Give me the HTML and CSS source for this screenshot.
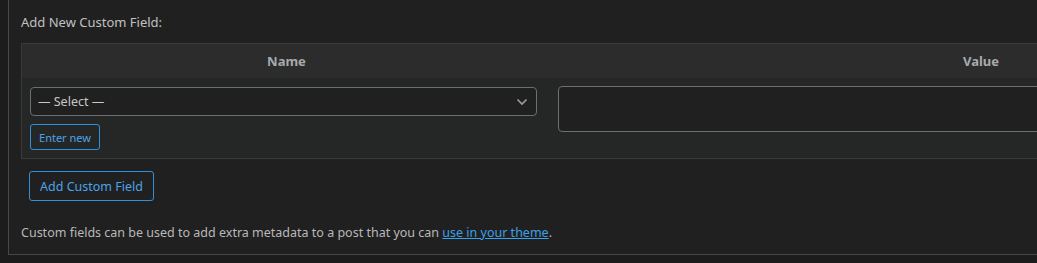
FILE: index.html
```html
<!DOCTYPE html>
<html lang="en">
<head>
    <meta charset="UTF-8">
    <meta name="viewport" content="width=device-width, initial-scale=1.0">
    <title>Custom Fields</title>
    <link rel="stylesheet" href="styles.css">
</head>
<body>
    <div class="panel">
        <p class="add-title">Add New Custom Field:</p>
        <div class="meta-table">
            <div class="meta-head">
                <div class="col-name">Name</div>
                <div class="col-value">Value</div>
            </div>
            <div class="meta-row">
                <div class="col-name cell">
                    <div class="select-box">
                        <span>&mdash; Select &mdash;</span>
                        <svg class="chevron" width="12" height="8" viewBox="0 0 12 8">
                            <path d="M1.5 1.5 L6 6 L10.5 1.5" fill="none" stroke="#9a9a9a" stroke-width="1.7"/>
                        </svg>
                    </div>
                    <button class="btn btn-small">Enter new</button>
                </div>
                <div class="col-value cell">
                    <textarea class="value-box"></textarea>
                </div>
            </div>
        </div>
        <div class="submit-row">
            <button class="btn btn-add">Add Custom Field</button>
        </div>
        <p class="help">Custom fields can be used to add extra metadata to a post that you can <a href="#">use in your theme</a>.</p>
    </div>
</body>
</html>
```

FILE: styles.css
```css
body {
    margin: 0;
    background: #1c1c1c;
    font-family: "Noto Sans", "Open Sans", sans-serif;
    font-size: 13px;
    color: #c3c4c7;
    overflow: hidden;
}
.panel {
    margin-left: 8px;
    width: 1500px;
    height: 255px;
    box-sizing: border-box;
    background: #202020;
    border-left: 1px solid #474747;
    border-bottom: 1px solid #474747;
    padding: 12px 12px 0 12px;
}
.add-title {
    margin: 0 0 11px 0;
    line-height: 20px;
    color: #c0c0c0;
}
.meta-table {
    width: 1395px;
    border: 1px solid #3a3a3a;
}
.meta-head {
    display: flex;
    height: 34px;
    align-items: center;
    background: #2c2c2c;
    font-weight: bold;
    color: #a7aaad;
}
.col-name {
    width: 529px;
    text-align: center;
}
.col-value {
    flex: 1;
    text-align: center;
    padding-right: 6px;
}
.meta-row {
    display: flex;
    height: 80px;
    background: #252726;
}
.cell {
    text-align: left;
    box-sizing: border-box;
}
.col-name.cell {
    padding: 9px 0 0 8px;
}
.col-value.cell {
    padding: 8px 0 0 7px;
}
.select-box {
    width: 507px;
    height: 29px;
    box-sizing: border-box;
    border: 1px solid #6e6e6e;
    border-radius: 4px;
    background: #202020;
    display: flex;
    align-items: center;
    justify-content: space-between;
    padding: 0 8px 0 7px;
    color: #c8c8c8;
    font-size: 12.5px;
}
.select-box span {
    margin-top: -1px;
}
.chevron {
    margin-top: 1px;
}
.btn {
    display: block;
    background: transparent;
    border: 1px solid #3390d6;
    border-radius: 3px;
    color: #4ba3e8;
    font-family: inherit;
    cursor: pointer;
    padding: 0;
}
.btn-small {
    margin-top: 8px;
    width: 70px;
    height: 26px;
    font-size: 11px;
}
.value-box {
    display: block;
    width: 100%;
    height: 46px;
    box-sizing: border-box;
    border: 1px solid #6e6e6e;
    border-radius: 4px;
    background: #202020;
    resize: none;
}
.submit-row {
    padding: 12px 0 0 8px;
}
.btn-add {
    width: 125px;
    height: 30px;
    font-size: 12.5px;
}
.help {
    margin: 22px 0 0 0;
    line-height: 20px;
    font-size: 12.5px;
    color: #b8b8b8;
}
.help a {
    color: #3ba0ea;
}
```
